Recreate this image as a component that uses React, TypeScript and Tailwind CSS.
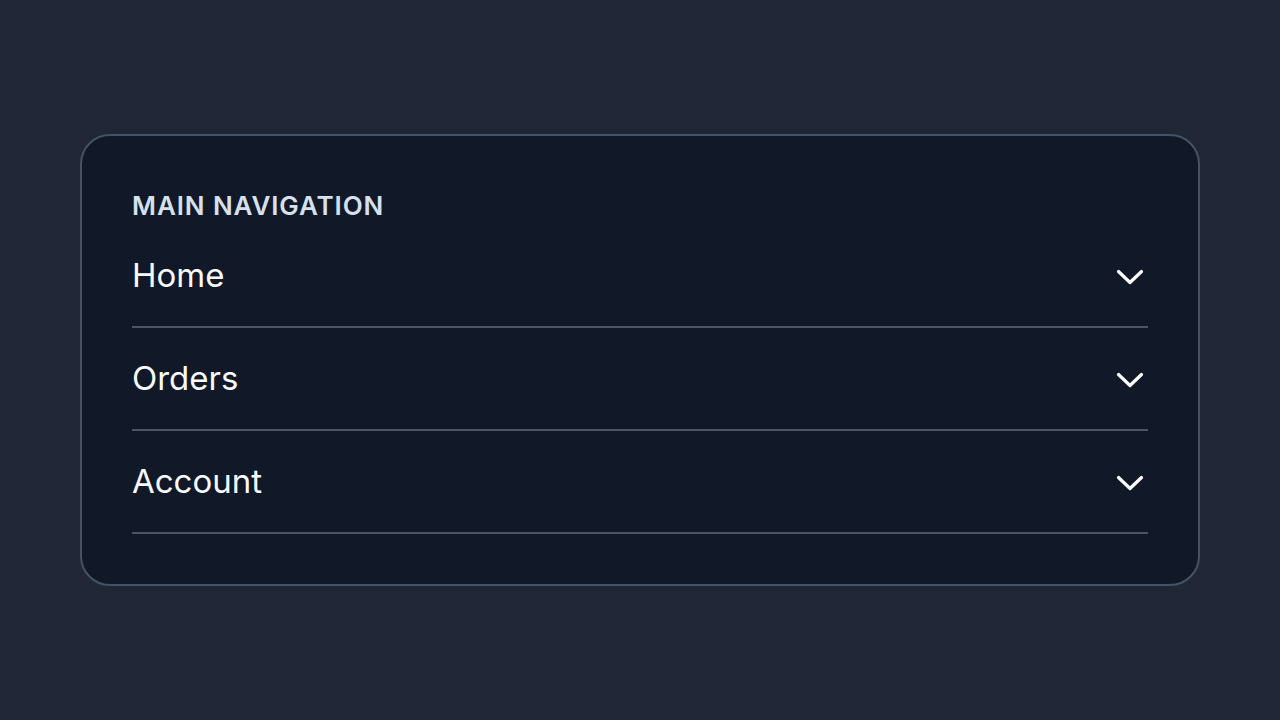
import React from 'react';

const items = ['Home', 'Orders', 'Account'];

const Chevron = () => (
    <svg width="30" height="18" viewBox="0 0 30 18" fill="none" className="text-white">
        <polyline points="3.5,3.5 15,14.5 26.5,3.5" stroke="currentColor" strokeWidth="3.2" strokeLinecap="round" strokeLinejoin="round" />
    </svg>
);

export default function App() {
    return (
        <div className="min-h-screen bg-[#222738] flex items-center justify-center px-20" style={{ fontFamily: 'Inter, "Noto Sans", sans-serif' }}>
            <div className="w-full bg-[#111827] border-2 border-[#465366] rounded-[30px] px-[50px] pt-[52px] pb-[50px]">
                <h2 className="text-[26px] leading-[36px] font-semibold tracking-[0.9px] text-[#d6e0ee] uppercase">Main Navigation</h2>
                <ul className="mt-[1px]">
                    {items.map((item) => (
                        <li key={item} className="border-b-2 border-[#4b5563]">
                            <button className="w-full flex items-center justify-between h-[101px] text-left">
                                <span className="text-[33px] text-[#f8fafc]">{item}</span>
                                <span className="pr-[3px] pt-[2px]"><Chevron /></span>
                            </button>
                        </li>
                    ))}
                </ul>
            </div>
        </div>
    );
}
